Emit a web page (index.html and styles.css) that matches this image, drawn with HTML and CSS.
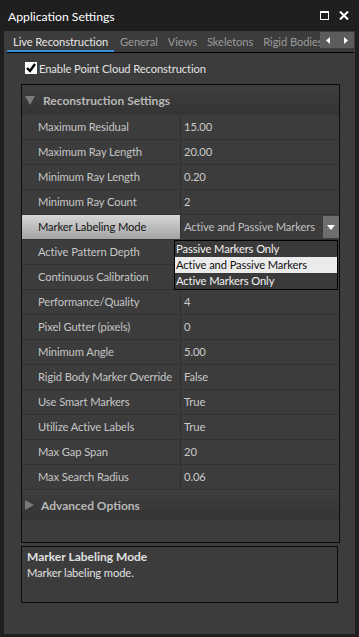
FILE: index.html
```html
<!DOCTYPE html>
<html lang="en">
<head>
    <meta charset="UTF-8">
    <meta name="viewport" content="width=device-width, initial-scale=1.0">
    <title>Application Settings</title>
    <link rel="stylesheet" href="styles.css">
</head>
<body>
    <div class="titlebar">
        <span class="title">Application Settings</span>
        <div class="win-btns">
            <svg width="9" height="9" viewBox="0 0 9 9"><rect x="0.5" y="0.5" width="8" height="8" fill="none" stroke="#fff" stroke-width="1"/><rect x="0" y="0" width="9" height="2" fill="#fff"/></svg>
            <svg width="10" height="9" viewBox="0 0 10 9"><path d="M1 0.5 L9 8.5 M9 0.5 L1 8.5" stroke="#fff" stroke-width="2"/></svg>
        </div>
    </div>

    <div class="panel">
        <div class="tabbar">
            <div class="tab active">Live Reconstruction</div>
            <div class="tab">General</div>
            <div class="tab">Views</div>
            <div class="tab">Skeletons</div>
            <div class="tab">Rigid Bodies</div>
            <div class="tab-scroll">
                <svg width="6" height="7" viewBox="0 0 6 7"><path d="M4 0 L4 7 L0 3.5 Z" fill="#fff"/></svg>
                <svg width="6" height="7" viewBox="0 0 6 7"><path d="M1 0 L1 7 L5 3.5 Z" fill="#fff"/></svg>
            </div>
        </div>

        <label class="check">
            <span class="box">
                <svg width="12" height="12" viewBox="0 0 12 12"><path d="M2 6 L5 9 L10 2" fill="none" stroke="#000" stroke-width="2.4"/></svg>
            </span>
            Enable Point Cloud Reconstruction
        </label>

        <div class="grid">
            <div class="section">
                <span class="tri down"></span>Reconstruction Settings
            </div>
            <div class="row"><div class="name">Maximum Residual</div><div class="val">15.00</div></div>
            <div class="row"><div class="name">Maximum Ray Length</div><div class="val">20.00</div></div>
            <div class="row"><div class="name">Minimum Ray Length</div><div class="val">0.20</div></div>
            <div class="row"><div class="name">Minimum Ray Count</div><div class="val">2</div></div>
            <div class="row selected">
                <div class="name">Marker Labeling Mode</div>
                <div class="val combo">
                    <span>Active and Passive Markers</span>
                    <span class="combo-btn">
                        <svg width="8" height="5" viewBox="0 0 8 5"><path d="M0 0 L8 0 L4 5 Z" fill="#fff"/></svg>
                    </span>
                </div>
                <ul class="droplist">
                    <li>Passive Markers Only</li>
                    <li class="on">Active and Passive Markers</li>
                    <li>Active Markers Only</li>
                </ul>
            </div>
            <!-- values of the next two rows sit under the open list -->
            <div class="row"><div class="name">Active Pattern Depth</div><div class="val"></div></div>
            <div class="row"><div class="name">Continuous Calibration</div><div class="val"></div></div>
            <div class="row"><div class="name">Performance/Quality</div><div class="val">4</div></div>
            <div class="row"><div class="name">Pixel Gutter (pixels)</div><div class="val">0</div></div>
            <div class="row"><div class="name">Minimum Angle</div><div class="val">5.00</div></div>
            <div class="row"><div class="name">Rigid Body Marker Override</div><div class="val">False</div></div>
            <div class="row"><div class="name">Use Smart Markers</div><div class="val">True</div></div>
            <div class="row"><div class="name">Utilize Active Labels</div><div class="val">True</div></div>
            <div class="row"><div class="name">Max Gap Span</div><div class="val">20</div></div>
            <div class="row"><div class="name">Max Search Radius</div><div class="val">0.06</div></div>
            <div class="section">
                <span class="tri right"></span>Advanced Options
            </div>
        </div>

        <div class="desc">
            <div class="desc-title">Marker Labeling Mode</div>
            <div>Marker labeling mode.</div>
        </div>
    </div>
</body>
</html>
```

FILE: styles.css
```css
body {
    margin: 0;
    background-color: #1f1f1f;
    font-family: Lato, "Noto Sans", sans-serif;
    font-size: 11.2px;
    letter-spacing: -0.1px;
    color: #c6c6c6;
    width: 359px;
    height: 637px;
    overflow: hidden;
}
.titlebar {
    height: 31px;
    display: flex;
    align-items: center;
    justify-content: space-between;
    padding: 0 10px 0 8px;
    color: #fff;
    font-size: 12.2px;
    letter-spacing: 0;
}
.title {
    margin-top: 2px;
}
.win-btns {
    display: flex;
    gap: 10px;
    margin-top: -1px;
}
.panel {
    position: relative;
    margin: 0 4px;
    height: 603px;
    background-color: #3c3c3c;
    box-sizing: border-box;
    padding-top: 1px;
}
.tabbar {
    display: flex;
    align-items: flex-end;
    height: 20px;
    margin: 0 0 0 3px;
    width: 347px;
    border-bottom: 1px solid #000;
    position: relative;
    overflow: hidden;
}
.tab {
    padding: 0 4px 0 6px;
    height: 19px;
    line-height: 17px;
    color: #9a9a9a;
    white-space: nowrap;
    flex: none;
}
.tab.active {
    color: #e6e6e6;
    box-shadow: inset 0 -2px 0 #3b8edb;
    padding: 0 6px 0 6px;
}
.tab-scroll {
    position: absolute;
    right: 0;
    top: 0;
    width: 34px;
    height: 16px;
    background-color: #5c5c5c;
    display: flex;
    align-items: center;
    justify-content: space-around;
}
.check {
    display: flex;
    align-items: center;
    gap: 2px;
    margin: 8px 0 0 21px;
    height: 14px;
    color: #e2e2e2;
}
.box {
    width: 12px;
    height: 12px;
    background-color: #fff;
    display: flex;
}
.grid {
    position: relative;
    margin: 9px 0 0 17px;
    width: 317px;
    height: 457px;
    border: 1px solid #0c0c0c;
}
.section {
    height: 30px;
    display: flex;
    align-items: center;
    font-weight: bold;
    font-size: 12px;
    letter-spacing: 0;
    color: #b8b8b8;
    background: linear-gradient(#3e3e3e, #343434);
}
.tri {
    width: 0;
    height: 0;
    margin: 0 8px 0 3px;
}
.tri.down {
    border-left: 5px solid transparent;
    border-right: 5px solid transparent;
    border-top: 9px solid #7a7a7a;
}
.tri.right {
    border-top: 5px solid transparent;
    border-bottom: 5px solid transparent;
    border-left: 9px solid #7a7a7a;
    margin: 0 7px 0 3px;
}
.row {
    position: relative;
    display: flex;
    height: 25px;
    box-sizing: border-box;
    border-bottom: 1px solid #333;
}
.name {
    width: 159px;
    padding-left: 16px;
    box-sizing: border-box;
    line-height: 24px;
    border-right: 1px solid #2f2f2f;
    white-space: nowrap;
}
.val {
    flex: 1;
    padding-left: 3px;
    line-height: 24px;
    color: #cacaca;
    white-space: nowrap;
}
.selected .name {
    background: linear-gradient(#d6d6d6, #a4a4a4);
    color: #151515;
}
.combo {
    display: flex;
    justify-content: space-between;
    color: #c0c0c0;
}
.combo-btn {
    width: 16px;
    height: 22px;
    margin-top: 1px;
    background-color: #6e6e6e;
    display: flex;
    align-items: center;
    justify-content: center;
}
.droplist {
    position: absolute;
    left: 152px;
    top: 25px;
    width: 162px;
    margin: 0;
    padding: 0;
    list-style: none;
    background-color: #3a3a3a;
    border: 1px solid #000;
    z-index: 2;
}
.droplist li {
    height: 16px;
    line-height: 16px;
    padding-left: 1px;
    color: #f2f2f2;
    white-space: nowrap;
}
.droplist li.on {
    background-color: #ebebeb;
    color: #111;
}
.desc {
    margin: 3px 0 0 17px;
    width: 317px;
    height: 57px;
    border: 1px solid #0c0c0c;
    padding: 2px 0 0 5px;
    box-sizing: border-box;
    color: #e0e0e0;
    line-height: 16px;
}
.desc-title {
    font-weight: bold;
    font-size: 12px;
    letter-spacing: 0;
}
```
